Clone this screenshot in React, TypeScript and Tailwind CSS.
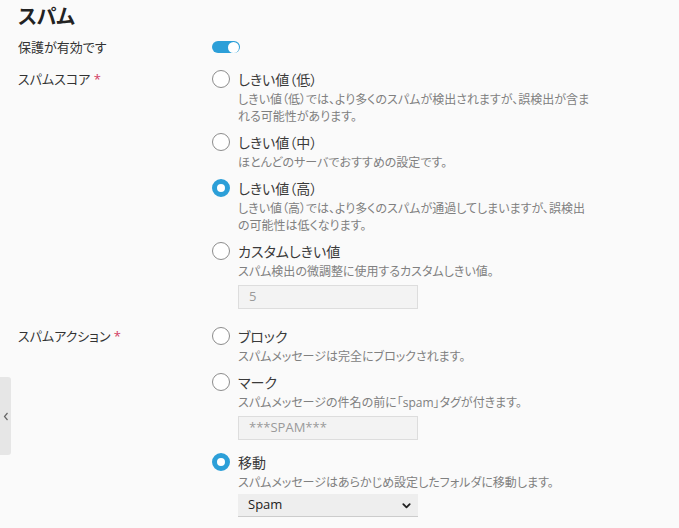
import * as React from "react";

const font = "font-['Open_Sans','Noto_Sans_CJK_JP',sans-serif] [font-feature-settings:'palt']";

interface IOption {
  label: string;
  desc: string;
  checked?: boolean;
  extra?: React.ReactNode;
}

const Radio = ({ checked }: { checked?: boolean }) =>
  checked ? (
    <span className="block w-[18px] h-[18px] rounded-full border-[5px] border-[#2c9fd8] bg-white shrink-0" />
  ) : (
    <span className="block w-[18px] h-[18px] rounded-full border border-[#8c8c8c] bg-white shrink-0" />
  );

const Toggle = () => (
  <span className="flex items-center w-[28px] h-[12px] rounded-full bg-[#2c9fd8] justify-end pr-[1px]">
    <span className="block w-[11px] h-[11px] rounded-full bg-white" />
  </span>
);

const Options = ({ items }: { items: IOption[] }) => (
  <div className="flex flex-col gap-[5px]">
    {items.map((item, key) => (
      <div key={key}>
        <div className="flex items-center gap-[8px] h-[24px]">
          <Radio checked={item.checked} />
          <span className="text-[14px] text-[#3a3a3a]">{item.label}</span>
        </div>
        <p className="pl-[26px] w-[381px] text-[12px] leading-[17px] text-[#808080]">{item.desc}</p>
        {item.extra}
      </div>
    ))}
  </div>
);

const TextBox = ({ value }: { value: string }) => (
  <div className="ml-[26px] mt-[5px] mb-[5px] w-[180px] h-[24px] flex items-center pl-[10px] bg-[#f3f3f3] border border-[#dddddd] text-[13px] text-[#9a9a9a]">
    {value}
  </div>
);

const App = () => {
  const score: IOption[] = [
    { label: "しきい値（低）", desc: "しきい値（低）では、より多くのスパムが検出されますが、誤検出が含まれる可能性があります。" },
    { label: "しきい値（中）", desc: "ほとんどのサーバでおすすめの設定です。" },
    { label: "しきい値（高）", desc: "しきい値（高）では、より多くのスパムが通過してしまいますが、誤検出の可能性は低くなります。", checked: true },
    { label: "カスタムしきい値", desc: "スパム検出の微調整に使用するカスタムしきい値。", extra: <TextBox value="5" /> },
  ];

  const action: IOption[] = [
    { label: "ブロック", desc: "スパムメッセージは完全にブロックされます。" },
    { label: "マーク", desc: "スパムメッセージの件名の前に「spam」タグが付きます。", extra: <TextBox value="***SPAM***" /> },
    {
      label: "移動",
      desc: "スパムメッセージはあらかじめ設定したフォルダに移動します。",
      checked: true,
      extra: (
        <div className="ml-[26px] mt-[3px] w-[180px] h-[23px] flex items-center justify-between pl-[10px] pr-[6px] bg-[#eeeeee] border-b border-[#cccccc] text-[13px] text-[#222]">
          <span>Spam</span>
          <svg width="11" height="11" viewBox="0 0 24 24" fill="none" stroke="#222" strokeWidth="4" strokeLinecap="round" strokeLinejoin="round">
            <path d="M5 9l7 7 7-7" />
          </svg>
        </div>
      ),
    },
  ];

  return (
    <div className={`relative min-h-screen bg-[#fafafa] pt-[3px] px-[18px] ${font}`}>
      <h1 className="text-[20px] leading-[28px] font-bold text-[#222]">スパム</h1>
      <div className="flex mt-[4px]">
        <div className="w-[194px] text-[13px] leading-[24px] text-[#333]">保護が有効です</div>
        <div className="h-[24px] flex items-center">
          <Toggle />
        </div>
      </div>
      <div className="flex mt-[8px]">
        <div className="w-[194px] text-[13px] leading-[24px] text-[#333]">
          スパムスコア <span className="text-[#d23c62]">*</span>
        </div>
        <Options items={score} />
      </div>
      <div className="flex mt-[10px]">
        <div className="w-[194px] text-[13px] leading-[24px] text-[#333]">
          スパムアクション <span className="text-[#d23c62]">*</span>
        </div>
        <Options items={action} />
      </div>
      <div className="absolute left-0 top-[377px] w-[11px] h-[78px] bg-[#e6e6e6] rounded-r-[3px] flex items-center justify-center">
        <svg width="6" height="9" viewBox="0 0 6 9" fill="none" stroke="#666" strokeWidth="1.2">
          <path d="M4.5 1L1.5 4.5L4.5 8" />
        </svg>
      </div>
    </div>
  );
};

export default App;
